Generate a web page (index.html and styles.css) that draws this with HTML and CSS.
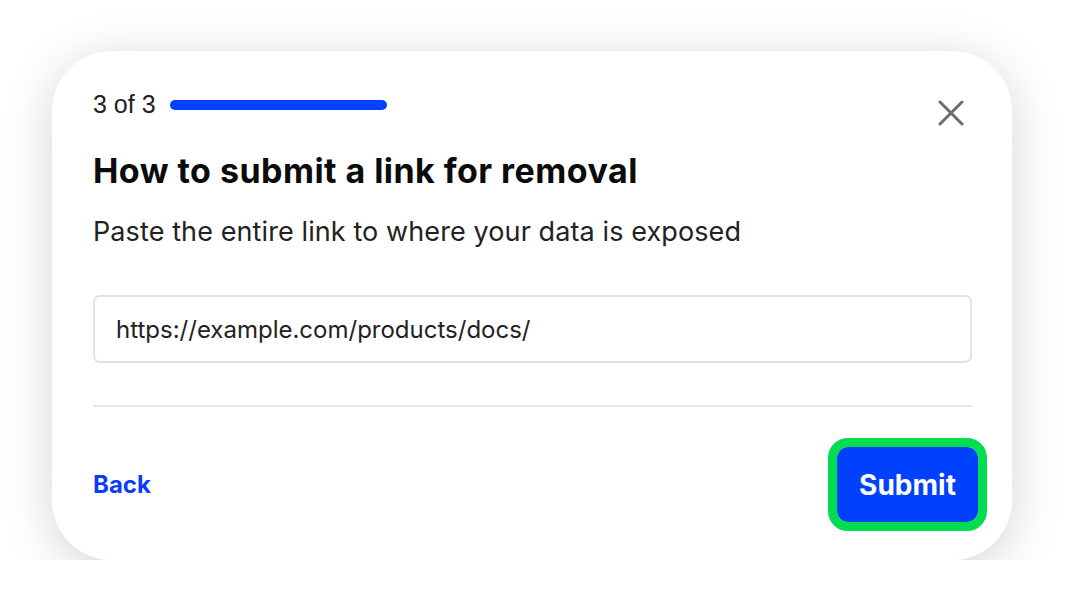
FILE: index.html
```html
<!DOCTYPE html>
<html lang="en">
<head>
    <meta charset="UTF-8">
    <meta name="viewport" content="width=device-width, initial-scale=1.0">
    <title>Submit a link for removal</title>
    <link rel="stylesheet" href="styles.css">
</head>
<body>
    <div class="card">
        <div class="top">
            <div class="progress">
                <span class="step">3 of 3</span>
                <span class="bar"></span>
            </div>
            <button class="close" type="button" aria-label="Close">
                <svg width="26" height="26" viewBox="0 0 26 26">
                    <path d="M2 2 L24 24 M24 2 L2 24" stroke="#6b6c75" stroke-width="3" stroke-linecap="round" fill="none"/>
                </svg>
            </button>
        </div>

        <h1>How to submit a link for removal</h1>
        <p class="lead">Paste the entire link to where your data is exposed</p>

        <input type="text" class="link-input" value="https://example.com/products/docs/">

        <div class="divider"></div>

        <div class="footer">
            <a href="#" class="back">Back</a>
            <button type="button" class="submit">Submit</button>
        </div>
    </div>
</body>
</html>
```

FILE: styles.css
```css
body {
    font-family: Inter, "Noto Sans", sans-serif;
    margin: 0;
    padding: 0;
    background-color: #fff;
}
.card {
    width: 960px;
    height: 509px;
    box-sizing: border-box;
    margin: 51px 0 0 52px;
    padding: 40px 40px 0 41px;
    background-color: #fff;
    border-radius: 60px;
    box-shadow: 0 8px 50px rgba(0, 0, 0, 0.17);
}
.top {
    display: flex;
    justify-content: space-between;
    align-items: flex-start;
    height: 48px;
}
.progress {
    display: flex;
    align-items: center;
    gap: 14px;
}
.step {
    font-family: "Liberation Sans", Arial, sans-serif;
    font-size: 25px;
    line-height: 27px;
    color: #222;
}
.bar {
    display: block;
    width: 217px;
    height: 10px;
    border-radius: 5px;
    background-color: #0040ff;
}
.close {
    border: none;
    background: none;
    padding: 0;
    margin: 9px 8px 0 0;
    width: 26px;
    height: 26px;
    cursor: pointer;
}
.close svg {
    display: block;
}
h1 {
    font-size: 34px;
    font-weight: 700;
    color: #0b0b0b;
    margin: 12px 0 0;
    line-height: 40px;
    letter-spacing: 0.45px;
}
.lead {
    font-size: 27px;
    color: #222;
    margin: 24px 0 0;
    line-height: 34px;
    letter-spacing: 0.1px;
}
.link-input {
    display: block;
    width: 100%;
    height: 68px;
    box-sizing: border-box;
    margin-top: 46px;
    padding: 0 21px;
    border: 2px solid #e3e3e6;
    border-radius: 7px;
    font-family: Inter, "Noto Sans", sans-serif;
    font-size: 24px;
    color: #222;
}
.divider {
    height: 2px;
    background-color: #e6e6e8;
    margin-top: 42px;
}
.footer {
    display: flex;
    justify-content: space-between;
    align-items: center;
    margin-top: 31px;
}
.back {
    font-size: 24px;
    font-weight: 700;
    color: #0a3cff;
    text-decoration: none;
}
.submit {
    width: 159px;
    height: 93px;
    margin-right: -15px;
    border: 9px solid #00dd4f;
    border-radius: 20px;
    background-color: #0040ff;
    background-clip: padding-box;
    color: #fff;
    font-family: Inter, "Noto Sans", sans-serif;
    font-size: 28px;
    font-weight: 700;
    cursor: pointer;
}
```
